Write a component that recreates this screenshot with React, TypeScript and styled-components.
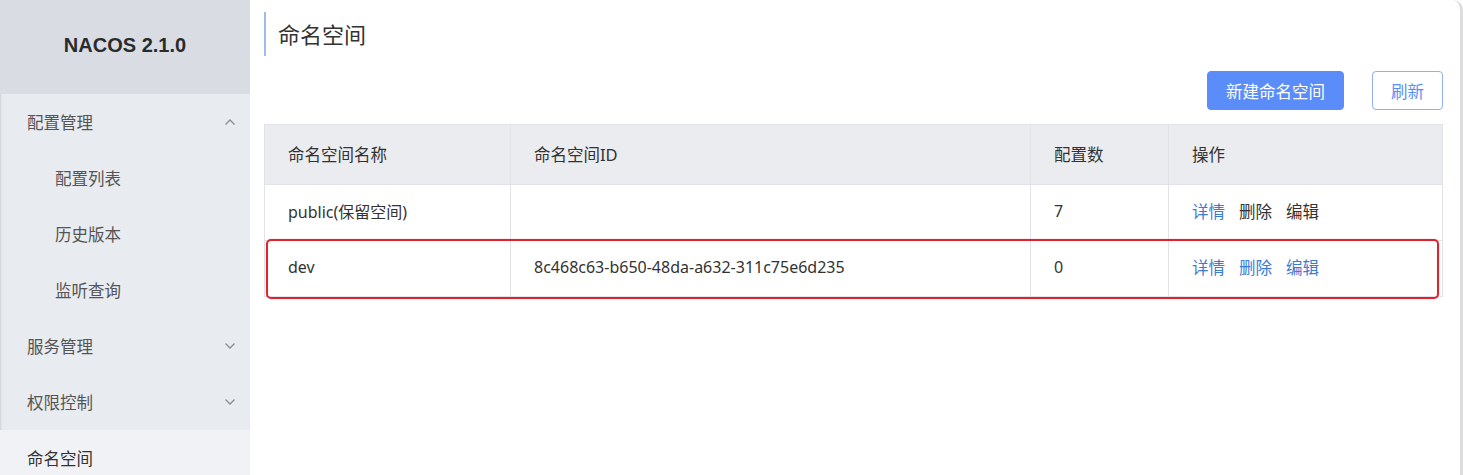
import React from "react";
import styled, { createGlobalStyle } from "styled-components";

const GlobalStyle = createGlobalStyle`
  html, body {
    margin: 0;
    padding: 0;
    background: #ffffff;
    overflow: hidden;
  }
  body {
    font-family: "Noto Sans", "Noto Sans CJK SC", sans-serif;
    color: #333;
  }
`;

const Page = styled.div`
  display: flex;
  width: 1463px;
  height: 475px;
  box-sizing: border-box;
  border-right: 3px solid #dcdcdc;
  border-top-right-radius: 10px;
  overflow: hidden;
  background: #fff;
`;

const Sidebar = styled.aside`
  width: 250px;
  flex: 0 0 250px;
  display: flex;
  flex-direction: column;
  background: #e8ebf0;
  box-shadow: inset 2px 0 2px -1px #cfd2d6;
`;

const Brand = styled.div`
  height: 94px;
  flex: 0 0 94px;
  display: flex;
  align-items: center;
  justify-content: center;
  background: #d9dde3;
  font-family: "Liberation Sans", Arial, sans-serif;
  font-weight: 700;
  font-size: 20px;
  color: #2b2b2b;
  padding-bottom: 3px;
  box-sizing: border-box;
`;

const MenuItem = styled.div<{ $sub?: boolean; $active?: boolean }>`
  height: 56px;
  flex: 0 0 56px;
  display: flex;
  align-items: center;
  justify-content: space-between;
  padding: 0 14px 0 ${(p) => (p.$sub ? 55 : 27)}px;
  font-size: 16.5px;
  color: ${(p) => (p.$active ? "#333" : "#555")};
  background: ${(p) => (p.$active ? "#f1f2f5" : "transparent")};
  box-sizing: border-box;
`;

const Chevron = styled.svg`
  width: 12px;
  height: 8px;
  stroke: #8a8d92;
  fill: none;
  stroke-width: 1.3;
`;

const Main = styled.main`
  flex: 1;
  display: flex;
  flex-direction: column;
  padding: 12px 18px 0 14px;
  box-sizing: border-box;
`;

const Title = styled.h1`
  margin: 0;
  height: 44px;
  display: flex;
  align-items: center;
  padding-left: 12px;
  border-left: 2px solid #9dbde9;
  font-size: 22px;
  font-weight: 400;
  color: #333;
  line-height: 1;
`;

const Toolbar = styled.div`
  display: flex;
  justify-content: flex-end;
  gap: 28px;
  margin-top: 15px;
  margin-bottom: 14px;
`;

const Button = styled.button<{ $primary?: boolean }>`
  height: 39px;
  padding: 0 18px;
  border-radius: 4px;
  font-family: "Noto Sans CJK SC", sans-serif;
  font-size: 16.5px;
  cursor: pointer;
  border: 1px solid ${(p) => (p.$primary ? "#5a8dfa" : "#8fb0f5")};
  background: ${(p) => (p.$primary ? "#5a8dfa" : "#fff")};
  color: ${(p) => (p.$primary ? "#fff" : "#5a8dfa")};
`;

const Table = styled.table`
  width: 1178px;
  border-collapse: collapse;
  table-layout: fixed;
  border: 1px solid #e1e3e8;
`;

const HeadCell = styled.th<{ $w: number }>`
  width: ${(p) => p.$w}px;
  height: 60px;
  background: #ebecf0;
  text-align: left;
  font-weight: 400;
  font-size: 16.5px;
  color: #333;
  padding: 0 0 2px 23px;
  border: 1px solid #e1e3e8;
  box-sizing: border-box;
`;

const Row = styled.tr`
  height: 56px;
`;

const Cell = styled.td`
  font-size: 16px;
  color: #333;
  padding: 0 0 3px 23px;
  border: 1px solid #e1e3e8;
  white-space: nowrap;
  position: relative;
`;

const Highlight = styled.div`
  position: absolute;
  left: 1px;
  top: -2px;
  width: 1173px;
  height: 60px;
  border: 2px solid #e0232a;
  border-radius: 5px;
  box-sizing: border-box;
  pointer-events: none;
  box-shadow: 0 0 1px rgba(224, 35, 42, 0.6);
`;

const Actions = styled.div`
  display: flex;
  gap: 14px;
`;

const Link = styled.span<{ $muted?: boolean }>`
  font-size: 16.5px;
  color: ${(p) => (p.$muted ? "#333" : "#3a7bd8")};
  font-family: "Noto Sans CJK SC", sans-serif;
`;

const Up = () => (
  <Chevron viewBox="0 0 12 8">
    <polyline points="1.5,6.5 6,2 10.5,6.5" />
  </Chevron>
);
const Down = () => (
  <Chevron viewBox="0 0 12 8">
    <polyline points="1.5,1.5 6,6 10.5,1.5" />
  </Chevron>
);

export default function App() {
  return (
    <>
      <GlobalStyle />
      <Page>
        <Sidebar>
          <Brand>NACOS 2.1.0</Brand>
          <MenuItem>
            配置管理
            <Up />
          </MenuItem>
          <MenuItem $sub>配置列表</MenuItem>
          <MenuItem $sub>历史版本</MenuItem>
          <MenuItem $sub>监听查询</MenuItem>
          <MenuItem>
            服务管理
            <Down />
          </MenuItem>
          <MenuItem>
            权限控制
            <Down />
          </MenuItem>
          <MenuItem $active>命名空间</MenuItem>
        </Sidebar>
        <Main>
          <Title>命名空间</Title>
          <Toolbar>
            <Button $primary>新建命名空间</Button>
            <Button>刷新</Button>
          </Toolbar>
          <Table>
            <thead>
              <tr>
                <HeadCell $w={246}>命名空间名称</HeadCell>
                <HeadCell $w={520}>命名空间ID</HeadCell>
                <HeadCell $w={138}>配置数</HeadCell>
                <HeadCell $w={274}>操作</HeadCell>
              </tr>
            </thead>
            <tbody>
              <Row>
                <Cell>public(保留空间)</Cell>
                <Cell></Cell>
                <Cell>7</Cell>
                <Cell>
                  <Actions>
                    <Link>详情</Link>
                    <Link $muted>删除</Link>
                    <Link $muted>编辑</Link>
                  </Actions>
                </Cell>
              </Row>
              <Row>
                <Cell>
                  <Highlight />
                  dev
                </Cell>
                <Cell>8c468c63-b650-48da-a632-311c75e6d235</Cell>
                <Cell>0</Cell>
                <Cell>
                  <Actions>
                    <Link>详情</Link>
                    <Link>删除</Link>
                    <Link>编辑</Link>
                  </Actions>
                </Cell>
              </Row>
            </tbody>
          </Table>
        </Main>
      </Page>
    </>
  );
}
